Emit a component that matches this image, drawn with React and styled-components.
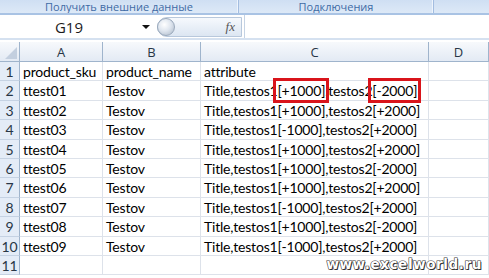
import React from 'react';
import styled, { createGlobalStyle } from 'styled-components';

const Global = createGlobalStyle`
  html, body { margin: 0; padding: 0; background: #fff; }
  body { width: 489px; height: 278px; overflow: hidden; }
`;

const Page = styled.div`
  position: relative;
  width: 489px;
  height: 278px;
  overflow: hidden;
  display: flex;
  flex-direction: column;
  font-family: Lato, "Liberation Sans", sans-serif;
`;

const Ribbon = styled.div`
  height: 13px;
  display: flex;
  background: linear-gradient(#cfdff3, #dde9f7);
  border-bottom: 2px solid #a9c3e4;
  overflow: hidden;
`;

const RibbonGroup = styled.div`
  width: ${p => p.w}px;
  flex: none;
  display: flex;
  justify-content: center;
  align-items: flex-end;
  border-right: 1px solid #a3bde0;
  box-shadow: inset -1px 0 0 #eef4fc;
  font-family: "Open Sans", "DejaVu Sans", sans-serif;
  font-size: 11px;
  line-height: 12px;
  color: #3f6ba5;
  white-space: nowrap;
`;

const FormulaBar = styled.div`
  height: 23px;
  display: flex;
  align-items: center;
  background: #fff;
  border-bottom: 2px solid #d5e1f0;
`;

const NameBox = styled.div`
  width: 138px;
  text-align: center;
  font-size: 15px;
  color: #1b1b1b;
  font-family: "Open Sans", "DejaVu Sans", sans-serif;
`;

const Arrow = styled.div`
  width: 0;
  height: 0;
  margin-left: 4px;
  border-left: 4px solid transparent;
  border-right: 4px solid transparent;
  border-top: 4px solid #111;
`;

const FxPill = styled.div`
  margin-left: 7px;
  width: 85px;
  height: 20px;
  box-sizing: border-box;
  border-radius: 10px 0 0 10px;
  background: linear-gradient(#f6f9fd, #dce6f2);
  border: 1px solid #b8c8dc;
  display: flex;
  align-items: center;
  justify-content: space-between;
  padding-right: 6px;
`;

const Knob = styled.div`
  width: 18px;
  height: 18px;
  border-radius: 50%;
  background: radial-gradient(circle at 40% 35%, #ffffff 0%, #dfe6ef 45%, #a9b6c6 100%);
  border: 1px solid #9aa9bb;
  box-sizing: border-box;
  margin-left: -1px;
`;

const Fx = styled.span`
  font-family: "Liberation Serif", serif;
  font-style: italic;
  font-size: 13px;
  color: #555;
`;

const FormulaInput = styled.div`
  flex: 1;
  height: 23px;
  border-left: 1px solid #c5d3e4;
  margin-left: 2px;
  background: #fff;
`;

const Sheet = styled.div`
  display: grid;
  grid-template-columns: 20px 83px 98px 228px 60px;
  grid-template-rows: 20px;
  grid-auto-rows: 19.4px;
  margin-top: 2px;
`;

const Cell = styled.div`
  box-sizing: border-box;
  border-right: 1px solid #dde2ea;
  border-bottom: 1px solid #dde2ea;
  font-size: 14px;
  letter-spacing: -0.2px;
  line-height: 20px;
  padding-left: 3px;
  color: #000;
  white-space: nowrap;
  overflow: visible;
  position: relative;
`;

const ColHead = styled.div`
  box-sizing: border-box;
  background: linear-gradient(#f7f9fc, #e3eaf4);
  border-right: 1px solid #9fb4cc;
  border-bottom: 1px solid #9fb4cc;
  text-align: center;
  line-height: 20px;
  color: #283646;
  font-family: "Open Sans", "DejaVu Sans", sans-serif;
  font-size: 13px;
`;

const Corner = styled(ColHead)`
  position: relative;
  &::after {
    content: '';
    position: absolute;
    right: 2px;
    bottom: 2px;
    border-left: 12px solid transparent;
    border-bottom: 12px solid #c3cfdf;
  }
`;

const RowHead = styled.div`
  box-sizing: border-box;
  background: #e4ecf7;
  border-right: 1px solid #9fb4cc;
  border-bottom: 1px solid #c5d2e3;
  text-align: center;
  font-size: 14px;
  line-height: 20px;
  color: #283646;
`;

const Boxed = styled.span`
  outline: 3px solid #d9141b;
  outline-offset: 1px;
`;

const Watermark = styled.div`
  position: absolute;
  right: 7px;
  bottom: 6px;
  font-family: "DejaVu Sans", sans-serif;
  font-weight: 900;
  font-size: 13.5px;
  letter-spacing: 0.6px;
  color: #fff;
  -webkit-text-stroke: 1.2px #3a3a3a;
  paint-order: stroke fill;
  text-shadow: 1px 1px 0 #333;
`;

const data = [
  ['ttest01', 'Testov', '+1000', '-2000', true],
  ['ttest02', 'Testov', '+1000', '+2000'],
  ['ttest03', 'Testov', '-1000', '+2000'],
  ['ttest04', 'Testov', '+1000', '+2000'],
  ['ttest05', 'Testov', '+1000', '-2000'],
  ['ttest06', 'Testov', '+1000', '+2000'],
  ['ttest07', 'Testov', '-1000', '+2000'],
  ['ttest08', 'Testov', '+1000', '-2000'],
  ['ttest09', 'Testov', '-1000', '+2000'],
];

const Attr = ({ a, b, marked }) =>
  marked ? (
    <>Title,testos1<Boxed>[{a}]</Boxed>,testos2<Boxed>[{b}]</Boxed></>
  ) : (
    <>Title,testos1[{a}],testos2[{b}]</>
  );

export default function App() {
  return (
    <Page>
      <Global />
      <Ribbon>
        <RibbonGroup w={238}>Получить внешние данные</RibbonGroup>
        <RibbonGroup w={194}>Подключения</RibbonGroup>
        <RibbonGroup w={60} />
      </Ribbon>
      <FormulaBar>
        <NameBox>G19</NameBox>
        <Arrow />
        <FxPill>
          <Knob />
          <Fx>fx</Fx>
        </FxPill>
        <FormulaInput />
      </FormulaBar>
      <Sheet>
        <Corner />
        <ColHead>A</ColHead>
        <ColHead>B</ColHead>
        <ColHead>C</ColHead>
        <ColHead>D</ColHead>
        <RowHead>1</RowHead>
        <Cell>product_sku</Cell>
        <Cell>product_name</Cell>
        <Cell>attribute</Cell>
        <Cell />
        {data.map((r, i) => (
          <React.Fragment key={i}>
            <RowHead>{i + 2}</RowHead>
            <Cell>{r[0]}</Cell>
            <Cell>{r[1]}</Cell>
            <Cell><Attr a={r[2]} b={r[3]} marked={r[4]} /></Cell>
            <Cell />
          </React.Fragment>
        ))}
        <RowHead>11</RowHead>
        <Cell />
        <Cell />
        <Cell />
        <Cell />
      </Sheet>
      <Watermark>www.excelworld.ru</Watermark>
    </Page>
  );
}
